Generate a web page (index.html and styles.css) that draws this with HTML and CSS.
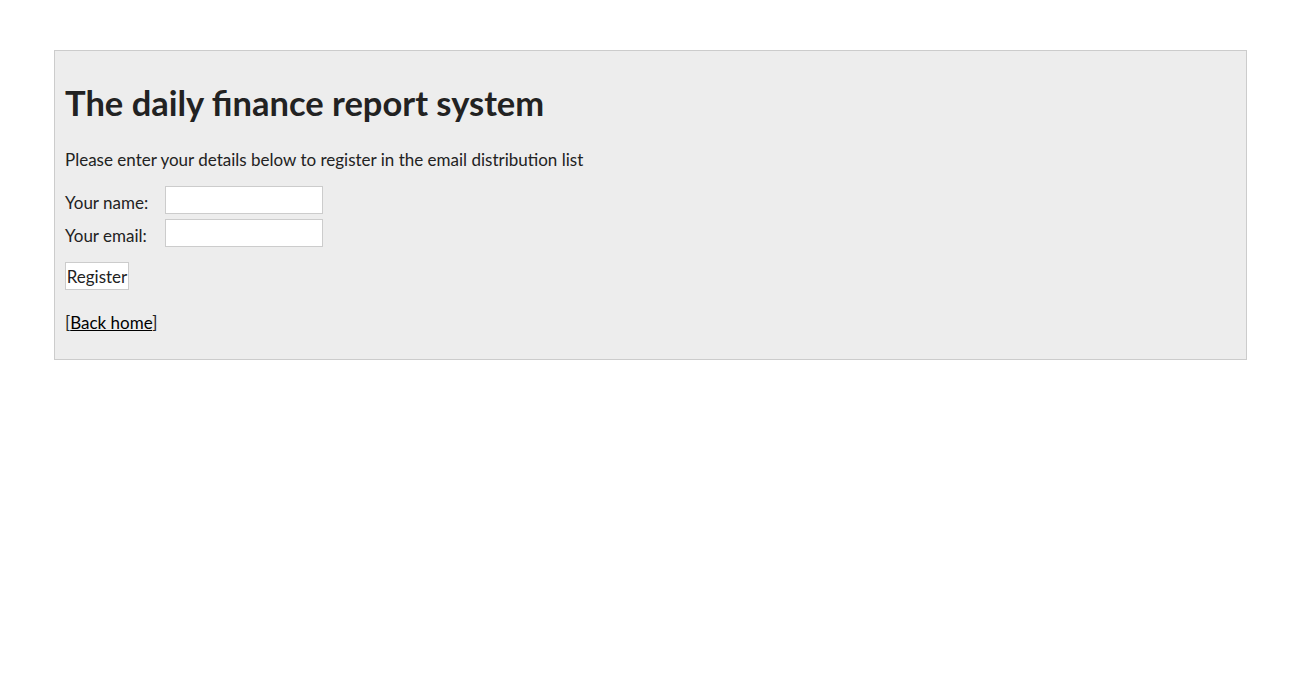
FILE: index.html
```html
<!DOCTYPE html>
<html>
<head>
<meta charset="utf-8">
<title>The daily finance report system</title>
<link rel="stylesheet" href="styles.css">
</head>
<body>
<div class="box">
  <h1 class="title">The daily finance report system</h1>
  <p class="intro">Please enter your details below to register in the email distribution list</p>
  <form class="form">
    <div class="row">
      <label class="label" for="name">Your name:</label>
      <input class="input" type="text" id="name">
    </div>
    <div class="row">
      <label class="label" for="email">Your email:</label>
      <input class="input" type="text" id="email">
    </div>
    <button class="btn" type="button">Register</button>
  </form>
  <p class="back">[<a class="link" href="#">Back home</a>]</p>
</div>
</body>
</html>
```
FILE: styles.css
```css
body {
  margin: 0;
  font-family: "Lato", "DejaVu Sans", sans-serif;
  font-size: 17px;
  color: #222;
  background: #fff;
}
.box {
  margin: 50px 54px 0;
  border: 1px solid #ccc;
  background: #ededed;
  padding: 0 10px 26px;
}
.title {
  margin: 31px 0 0;
  font-size: 34.5px;
  line-height: 42px;
  font-weight: bold;
  color: #222;
}
.intro {
  margin: 26px 0 0;
  line-height: 20px;
}
.form {
  margin-top: 16px;
  display: flex;
  flex-direction: column;
  align-items: flex-start;
  gap: 5px;
}
.row {
  display: flex;
  align-items: flex-start;
}
.label {
  width: 100px;
  padding-top: 7px;
  line-height: 20px;
}
.input {
  box-sizing: border-box;
  width: 158px;
  height: 28px;
  margin: 0;
  padding: 0 4px;
  border: 1px solid #ccc;
  background: #fff;
  font: inherit;
}
.btn {
  box-sizing: border-box;
  margin-top: 10px;
  width: 64px;
  height: 28px;
  padding: 0;
  border: 1px solid #ccc;
  background: #fff;
  font: inherit;
  color: #222;
  text-align: center;
}
.back {
  margin: 23px 0 0;
  line-height: 20px;
}
.link {
  color: #000;
  text-decoration: underline;
}
```
